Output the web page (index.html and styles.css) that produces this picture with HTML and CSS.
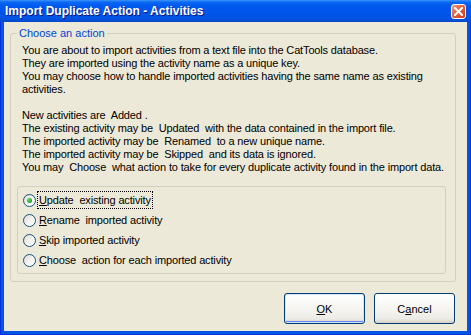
FILE: index.html
```html
<!DOCTYPE html>
<html lang="en">
<head>
    <meta charset="UTF-8">
    <title>Import Duplicate Action - Activities</title>
    <link rel="stylesheet" href="styles.css">
</head>
<body>

<div class="window">

  <div class="titlebar">
    <span class="title">Import Duplicate Action - Activities</span>
    <span class="close">
      <svg width="9" height="9" viewBox="0 0 9 9">
        <path d="M1 1 L8 8 M8 1 L1 8" stroke="#fff" stroke-width="2" stroke-linecap="square"/>
      </svg>
    </span>
  </div>

  <div class="client">

    <fieldset class="group">
      <legend>Choose an action</legend>

      <div class="info">
        <div>You are about to import activities from a text file into the CatTools database.</div>
        <div>They are imported using the activity name as a unique key.</div>
        <div>You may choose how to handle imported activities having the same name as existing</div>
        <div>activities.</div>
        <div>&nbsp;</div>
        <div>New activities are  Added .</div>
        <div>The existing activity may be  Updated  with the data contained in the import file.</div>
        <div>The imported activity may be  Renamed  to a new unique name.</div>
        <div>The imported activity may be  Skipped  and its data is ignored.</div>
        <div>You may  Choose  what action to take for every duplicate activity found in the import data.</div>
      </div>

      <fieldset class="options">
        <div class="option"><span class="radio checked"></span><span class="label focused"><u>U</u>pdate  existing activity</span></div>
        <div class="option"><span class="radio"></span><span class="label"><u>R</u>ename  imported activity</span></div>
        <div class="option"><span class="radio"></span><span class="label"><u>S</u>kip imported activity</span></div>
        <div class="option"><span class="radio"></span><span class="label"><u>C</u>hoose  action for each imported activity</span></div>
      </fieldset>
    </fieldset>

    <div class="buttons">
      <button class="btn default"><u>O</u>K</button>
      <button class="btn">C<u>a</u>ncel</button>
    </div>

  </div>
</div>

</body>
</html>
```

FILE: styles.css
```css
body {margin: 0;
      font-family: "Liberation Sans", Arial, sans-serif;
      font-size: 11px;}

.window {width: 471px;
         height: 335px;
         box-sizing: border-box;
         background: #0055e5;
         border: 1px solid #0831d9;
         border-top: none;
         display: flex;
         flex-direction: column;}

.titlebar {height: 22px;
           margin: 0 -1px;
           display: flex;
           align-items: center;
           justify-content: space-between;
           padding: 0 5px 0 5px;
           background: linear-gradient(to bottom, #3d95ff 0, #0a6af3 2px, #0058ee 6px, #0055eb 50%, #0053e1 85%, #0146c8 100%);}

.title {color: #fff;
        font-weight: bold;
        font-size: 12px;
        text-shadow: 1px 1px #0a1883;
        white-space: nowrap;}

.close {flex: none;
        width: 13px;
        height: 13px;
        border: 1px solid #fff;
        border-radius: 3px;
        background: linear-gradient(135deg, #f09a7a 0, #e2623f 45%, #cc3b1c 100%);
        display: flex;
        align-items: center;
        justify-content: center;
        margin-top: 1px;}

.client {flex: 1;
         margin: 0 3px 3px 3px;
         background: #ece9d8;
         display: flex;
         flex-direction: column;}

fieldset {border: 1px solid #d0d0bf;
          border-radius: 3px;
          min-inline-size: 0;}

.group {margin: 5px 11px 0 6px;
        padding: 0 9px 7px 6px;}

.group legend {color: #0046d5;
               padding: 0 2px;
               line-height: 13px;}

.info {margin-top: 4px;
       padding-left: 5px;
       line-height: 13px;
       letter-spacing: -0.15px;}

.info div {white-space: pre;}

.options {margin: 12px 0 0 0;
          padding: 3px 5px 3px 5px;}

.option {height: 20px;
         display: flex;
         align-items: center;}

.radio {flex: none;
        width: 11px;
        height: 11px;
        border: 1px solid #1c5180;
        border-radius: 50%;
        background: linear-gradient(135deg, #dcd9cf 0, #f4f3ee 50%, #fff 100%);
        display: flex;
        align-items: center;
        justify-content: center;}

.radio.checked::after {content: "";
                       width: 5px;
                       height: 5px;
                       border-radius: 50%;
                       background: radial-gradient(circle at 35% 35%, #5ee05e 0, #21a121 70%);}

.label {margin-left: 3px;
        white-space: pre;
        line-height: 14px;
        letter-spacing: -0.15px;}

.label.focused {outline: 1px dotted #000;
                margin-left: 2px;
                padding: 1px 1px;}

.buttons {display: flex;
          justify-content: flex-end;
          gap: 9px;
          margin-top: 11px;
          padding-right: 12px;}

.btn {width: 81px;
      height: 31px;
      font-family: inherit;
      font-size: 11px;
      color: #000;
      border: 1px solid #003c74;
      border-radius: 3px;
      background: linear-gradient(to bottom, #fff 0, #f4f3ee 60%, #ecebe6 85%, #d6d0c5 100%);
      padding: 0;}

.btn.default {box-shadow: inset 0 0 0 1px #cee7ff, inset 0 -1px 0 1px #6982ee;}
```
